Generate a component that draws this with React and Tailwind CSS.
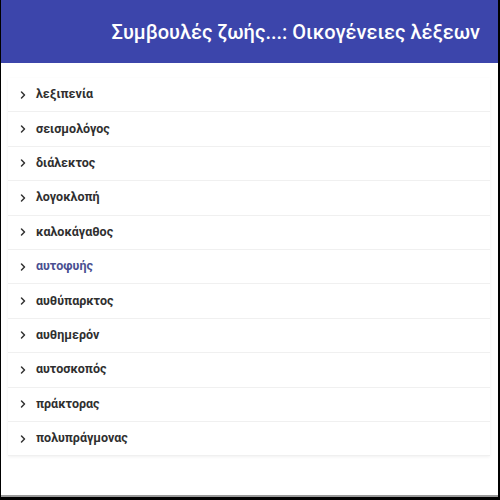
import { ChevronRight } from 'lucide-react';

const WORDS = [
  'λεξιπενία',
  'σεισμολόγος',
  'διάλεκτος',
  'λογοκλοπή',
  'καλοκάγαθος',
  'αυτοφυής',
  'αυθύπαρκτος',
  'αυθημερόν',
  'αυτοσκοπός',
  'πράκτορας',
  'πολυπράγμονας',
];

const App = () => {
  return (
    <div className="w-[500px] h-[500px] bg-black pl-[1px] pr-[2px] pb-[3px]">
      <div className="flex h-full flex-col bg-white border-b-2 border-[#9a9a9a]">
        <header className="flex h-[63px] shrink-0 items-center justify-end bg-[#3c45ab] pr-[18px]">
          <h1 className="text-[20px] font-medium text-white" style={{ fontFamily: 'Roboto, "Open Sans", sans-serif' }}>
            Συμβουλές ζωής...: Οικογένειες λέξεων
          </h1>
        </header>

        <ul className="mx-[7px] mt-[15px] mr-[8px] shadow-[0_1px_3px_rgba(0,0,0,0.06)]">
          {WORDS.map((word) => {
            const active = word === 'αυτοφυής';
            return (
              <li
                key={word}
                className="flex h-[34.4px] items-center gap-[7px] border-b border-[#f0f0f0] pl-[9px]"
              >
                <ChevronRight size={12} strokeWidth={3} className="text-[#333]" />
                <span
                  className={`text-[12.5px] font-bold ${active ? 'text-[#4a4f91]' : 'text-[#2f2f2f]'}`}
                  style={{ fontFamily: 'Roboto, "Open Sans", sans-serif' }}
                >
                  {word}
                </span>
              </li>
            );
          })}
        </ul>
      </div>
    </div>
  );
};

export default App;
